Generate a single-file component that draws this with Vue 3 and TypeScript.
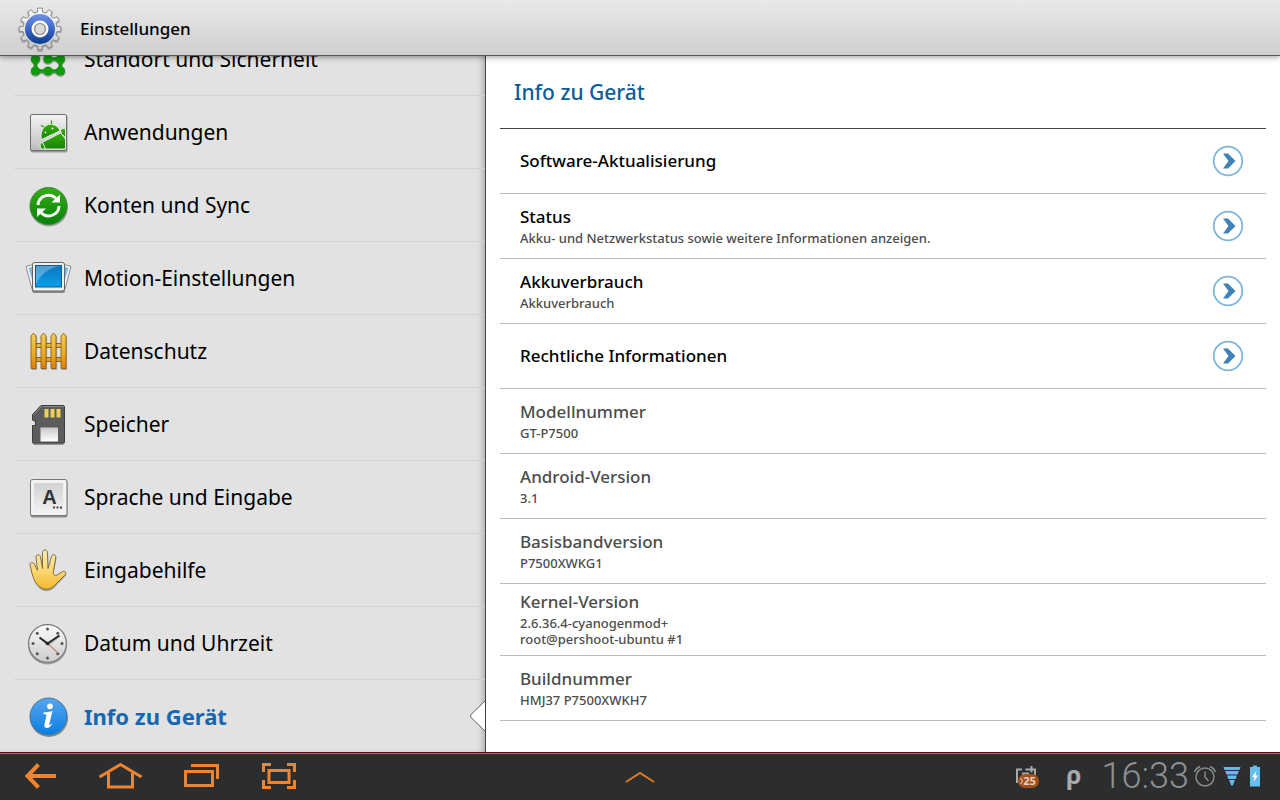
<script setup lang="ts">
interface MenuItem {
  id: string
  label: string
}

interface InfoRow {
  title: string
  lines: string[]
  link: boolean
}

const menu: MenuItem[] = [
  { id: 'lock', label: 'Standort und Sicherheit' },
  { id: 'apps', label: 'Anwendungen' },
  { id: 'sync', label: 'Konten und Sync' },
  { id: 'motion', label: 'Motion-Einstellungen' },
  { id: 'fence', label: 'Datenschutz' },
  { id: 'card', label: 'Speicher' },
  { id: 'key', label: 'Sprache und Eingabe' },
  { id: 'hand', label: 'Eingabehilfe' },
  { id: 'clock', label: 'Datum und Uhrzeit' },
  { id: 'info', label: 'Info zu Gerät' },
]

const selected = 'info'

const rows: InfoRow[] = [
  { title: 'Software-Aktualisierung', lines: [], link: true },
  { title: 'Status', lines: ['Akku- und Netzwerkstatus sowie weitere Informationen anzeigen.'], link: true },
  { title: 'Akkuverbrauch', lines: ['Akkuverbrauch'], link: true },
  { title: 'Rechtliche Informationen', lines: [], link: true },
  { title: 'Modellnummer', lines: ['GT-P7500'], link: false },
  { title: 'Android-Version', lines: ['3.1'], link: false },
  { title: 'Basisbandversion', lines: ['P7500XWKG1'], link: false },
  { title: 'Kernel-Version', lines: ['2.6.36.4-cyanogenmod+', 'root@pershoot-ubuntu #1'], link: false },
  { title: 'Buildnummer', lines: ['HMJ37 P7500XWKH7'], link: false },
]

function gearPath(cx: number, cy: number, outer: number, inner: number, teeth: number): string {
  const step = (Math.PI * 2) / teeth
  const points: string[] = []
  for (let i = 0; i < teeth; i++) {
    const mid = i * step - Math.PI / 2
    const corners: [number, number][] = [
      [inner, mid - step * 0.3],
      [outer, mid - step * 0.19],
      [outer, mid + step * 0.19],
      [inner, mid + step * 0.3],
    ]
    for (const [r, a] of corners) {
      points.push(`${(cx + r * Math.cos(a)).toFixed(2)} ${(cy + r * Math.sin(a)).toFixed(2)}`)
    }
  }
  return `M${points.join('L')}Z`
}

const gear = gearPath(24, 24, 21, 17, 12)
const clockDots = Array.from({ length: 8 }, (_, i) => ({
  x: 23.5 + 14.5 * Math.cos((i * Math.PI) / 4),
  y: 24.5 + 14.5 * Math.sin((i * Math.PI) / 4),
}))
const pickets = [7, 17, 27, 37]
</script>

<template>
  <div class="tablet">
    <header class="header">
      <svg class="gear" viewBox="0 0 48 48" aria-hidden="true">
        <defs>
          <linearGradient id="gearMetal" x1="0" y1="0" x2="0" y2="1">
            <stop offset="0" stop-color="#ffffff" />
            <stop offset="1" stop-color="#c4c4c4" />
          </linearGradient>
          <linearGradient id="gearBlue" x1="0" y1="0" x2="0" y2="1">
            <stop offset="0" stop-color="#6f93e6" />
            <stop offset="0.5" stop-color="#3a66c4" />
            <stop offset="1" stop-color="#0b3c8a" />
          </linearGradient>
        </defs>
        <path :d="gear" transform="translate(0 1)" fill="#777" stroke="#888" stroke-width="1.5" stroke-linejoin="round" opacity="0.6" />
        <path :d="gear" fill="url(#gearMetal)" stroke="#8c8c8c" stroke-linejoin="round" />
        <circle cx="24" cy="24" r="15" fill="url(#gearBlue)" />
        <circle cx="24" cy="24" r="8.5" fill="#fafafa" />
        <circle cx="24" cy="24" r="5.5" fill="#dadada" stroke="#858585" stroke-width="1.2" />
      </svg>
      <h1 class="app-title">Einstellungen</h1>
    </header>

    <main class="panes">
      <nav class="sidebar" aria-label="Einstellungen">
        <button
          v-for="item in menu"
          :key="item.id"
          type="button"
          class="entry"
          :class="{ active: item.id === selected }"
        >
          <svg class="entry-icon" viewBox="0 0 48 48" aria-hidden="true">
            <g v-if="item.id === 'lock'">
              <path d="M36.500 12.500H11.500V37H36.500V25H24" fill="none" stroke="#777" stroke-width="4.500" opacity="0.6" />
              <g fill="#777" opacity="0.6">
                <circle v-for="n in 9" :key="n" :cx="11.500 + ((n - 1) % 3) * 12.500" :cy="12.900 + Math.floor((n - 1) / 3) * 12" r="5" />
              </g>
              <path d="M36.500 12H11.500V36H36.500V24H24" fill="none" stroke="#109a0c" stroke-width="3.500" />
              <g fill="#109a0c">
                <circle v-for="n in 9" :key="n" :cx="11.500 + ((n - 1) % 3) * 12.500" :cy="12 + Math.floor((n - 1) / 3) * 12" r="4.600" />
              </g>
            </g>
            <g v-else-if="item.id === 'apps'">
              <defs>
                <linearGradient id="tile" x1="0" y1="0" x2="0" y2="1">
                  <stop offset="0" stop-color="#f4f4f4" />
                  <stop offset="1" stop-color="#bdbdbd" />
                </linearGradient>
                <linearGradient id="robot" x1="0" y1="0" x2="0" y2="1">
                  <stop offset="0" stop-color="#35ad0c" />
                  <stop offset="1" stop-color="#168404" />
                </linearGradient>
              </defs>
              <rect x="6.500" y="7.500" width="37" height="37" rx="2" fill="#666" opacity="0.6" />
              <rect x="6.500" y="6.500" width="36" height="36" rx="1.500" fill="url(#tile)" stroke="#6e6e6e" />
              <g fill="url(#robot)" stroke="#edf3ea" stroke-width="0.900">
                <path d="M18 34.500L36.800 24.800L41.500 31V39.500Q41.500 41 40 41H21Z" />
                <path d="M17.500 31.500C16 26 18 20 22.500 17.300C27.500 14.600 34 17.500 36 22.800Z" />
                <path d="M37.500 25.500L36.500 22.500Q38.500 19 41.500 21V30Z" />
                <path d="M16 36Q17 33.500 19 35L21.500 41H17.500Q16 39 16 36Z" />
              </g>
              <path d="M27.500 16V12.500M20 19L17 17.500" stroke="#2b9b0b" stroke-width="1.200" />
              <circle cx="21.500" cy="24.500" r="0.900" fill="#fff" />
              <circle cx="28.500" cy="20.500" r="0.900" fill="#fff" />
            </g>
            <g v-else-if="item.id === 'sync'">
              <defs>
                <linearGradient id="syncFill" x1="0" y1="0" x2="0" y2="1">
                  <stop offset="0" stop-color="#35ad16" />
                  <stop offset="1" stop-color="#068106" />
                </linearGradient>
              </defs>
              <circle cx="25" cy="26.500" r="19" fill="#555" opacity="0.5" />
              <circle cx="24.500" cy="25" r="18.500" fill="url(#syncFill)" stroke="#3d8438" />
              <path d="M13.900 24A10.600 10.600 0 0 1 32 17.500" fill="none" stroke="#fff" stroke-width="2.900" />
              <path d="M35.100 25A10.600 10.600 0 0 1 17 31.800" fill="none" stroke="#fff" stroke-width="2.900" />
              <path d="M36 13.500V21.500H27.500Z" fill="#fff" />
              <path d="M13 36V27.500H22Z" fill="#fff" />
            </g>
            <g v-else-if="item.id === 'motion'">
              <defs>
                <linearGradient id="screen" x1="0" y1="0" x2="0" y2="1">
                  <stop offset="0" stop-color="#0a74bd" />
                  <stop offset="1" stop-color="#0aa0ea" />
                </linearGradient>
              </defs>
              <path d="M2 12.500L12 9.500V38L8 35Z" fill="#f6f6f6" stroke="#8b8b8b" stroke-linejoin="round" />
              <path d="M4.500 14L10 12V32Z" fill="#79bcd8" />
              <path d="M47 12.500L37 9.500V38L41 35Z" fill="#f6f6f6" stroke="#8b8b8b" stroke-linejoin="round" />
              <path d="M44.500 14L39 12V32Z" fill="#79bcd8" />
              <rect x="8" y="10" width="33" height="29" rx="2" fill="#555" opacity="0.6" />
              <rect x="8.500" y="8.500" width="32" height="28.500" rx="2" fill="#efefef" stroke="#666" />
              <rect x="11.500" y="11.500" width="26" height="21.500" fill="url(#screen)" stroke="#17597f" />
              <path d="M12 12H36Q19 15 12 30Z" fill="#fff" opacity="0.300" />
            </g>
            <g v-else-if="item.id === 'fence'">
              <defs>
                <linearGradient id="wood" x1="0" y1="0" x2="0" y2="1">
                  <stop offset="0" stop-color="#f3cc5b" />
                  <stop offset="0.600" stop-color="#e9ac1e" />
                  <stop offset="1" stop-color="#dd7c09" />
                </linearGradient>
              </defs>
              <rect x="10" y="16.500" width="30" height="4" fill="#e8bd3c" stroke="#7c6539" />
              <rect x="10" y="30.500" width="30" height="4" fill="#e8a51f" stroke="#7c6539" />
              <path v-for="x in pickets" :key="x" :d="`M${x} 42V9L${x + 2} 6.500H${x + 3.500}L${x + 5.500} 9V42Z`" fill="#666" opacity="0.450" transform="translate(0.600 1)" />
              <path v-for="x in pickets" :key="x" :d="`M${x} 41.500V9L${x + 2} 6.500H${x + 3}L${x + 5} 9V41.500Z`" fill="url(#wood)" stroke="#946118" stroke-width="0.900" stroke-linejoin="round" />
            </g>
            <g v-else-if="item.id === 'card'">
              <defs>
                <linearGradient id="paper" x1="0" y1="0" x2="0" y2="1">
                  <stop offset="0" stop-color="#c9c9c9" />
                  <stop offset="1" stop-color="#ffffff" />
                </linearGradient>
              </defs>
              <path d="M17 6H39L41 8V43L39 45H10L8 43V26L11 25V22L8 20V15Z" fill="#333" opacity="0.450" />
              <path d="M17 5.500H39Q40.500 5.500 40.500 7V41.500Q40.500 43 39 43H10Q8.500 43 8.500 41.500V25.500H11.500V21.500L8.500 20V14.500Z" fill="#5c5c5c" stroke="#3c3c3c" />
              <path d="M17.500 6.500H39.500M9.500 15L17.500 6.500" stroke="#8b8b8b" fill="none" />
              <path d="M20.500 9H24.500V17.500H20.500ZM26.500 9H30.500V17.500H26.500ZM32.500 9H36.500V17.500H32.500Z" fill="#ecd05d" />
              <rect x="16.500" y="27.500" width="17.500" height="14" fill="url(#paper)" />
            </g>
            <g v-else-if="item.id === 'key'">
              <defs>
                <linearGradient id="keycap" x1="0" y1="0" x2="0" y2="1">
                  <stop offset="0" stop-color="#d2d2d2" />
                  <stop offset="1" stop-color="#efefef" />
                </linearGradient>
              </defs>
              <rect x="6.500" y="8" width="37" height="36.500" rx="2" fill="#555" opacity="0.600" />
              <rect x="6.500" y="6.500" width="36.500" height="36" rx="2" fill="#f2f2f2" stroke="#777" />
              <rect x="10" y="10" width="29" height="28" fill="url(#keycap)" />
              <text x="25.500" y="31" class="key-letter" text-anchor="middle">A</text>
              <path d="M29 34.500H31M32.500 34.500H34.500M36 34.500H38" stroke="#444" stroke-width="2" />
            </g>
            <g v-else-if="item.id === 'hand'">
              <defs>
                <linearGradient id="skin" x1="0" y1="0" x2="0" y2="1">
                  <stop offset="0" stop-color="#fbe9b5" />
                  <stop offset="0.500" stop-color="#fbd878" />
                  <stop offset="1" stop-color="#f3b929" />
                </linearGradient>
              </defs>
              <path d="M15 41C9 35 8 27 6 19C5.500 16 9.500 15.500 10.500 18.500L13.500 24.500L12 11C12 8 16 8 16.500 11L18.500 22.500L18.500 6.500C18.500 3.500 23 3.500 23.500 6.500L24 22.500L27.500 10.500C28.500 8 32.500 9 31.800 12L29.500 24.500C29 28 30 30.500 33 29L38.500 25.500C41.500 24.500 43 27 40.500 29.500L32.500 37.500C28 44.500 20 46 15 41Z" fill="#555" opacity="0.450" transform="translate(0.500 1.200)" />
              <path d="M15 40.500C9 35 8 27 6 19C5.500 16 9.500 15.500 10.500 18.500L13.500 24.500L12 11C12 8 16 8 16.500 11L18.500 22.500L18.500 6.500C18.500 3 23 3 23.500 6.500L24 22.500L27.500 10.500C28.500 7.500 32.500 8.500 31.800 12L29.500 24.500C29 28 30 30.500 33 29L38.500 25.500C41.500 24.500 43 27 40.500 29.500L32.500 37.500C28 44 20 45 15 40.500Z" fill="url(#skin)" stroke="#776336" stroke-width="0.900" stroke-linejoin="round" />
            </g>
            <g v-else-if="item.id === 'clock'">
              <defs>
                <linearGradient id="dial" x1="0" y1="0" x2="0" y2="1">
                  <stop offset="0" stop-color="#fbfbfb" />
                  <stop offset="1" stop-color="#cbcbcb" />
                </linearGradient>
              </defs>
              <circle cx="23.500" cy="26" r="19.500" fill="#555" opacity="0.500" />
              <circle cx="23.500" cy="24.500" r="18.900" fill="url(#dial)" stroke="#777" stroke-width="1.200" />
              <circle v-for="(d, i) in clockDots" :key="i" :cx="d.x" :cy="d.y" r="1.500" fill="#555" />
              <path d="M22.500 23.500L34 34" stroke="#c98282" stroke-width="1.200" />
              <path d="M24 27L35 18" stroke="#999" stroke-width="1.500" opacity="0.500" />
              <path d="M15.500 18.500L23.500 24.500L35.500 16.500" fill="none" stroke="#222" stroke-width="2" />
              <circle cx="23.500" cy="24.500" r="1.800" fill="#222" />
            </g>
            <g v-else>
              <defs>
                <linearGradient id="infoFill" x1="0" y1="0" x2="0" y2="1">
                  <stop offset="0" stop-color="#55a7ee" />
                  <stop offset="1" stop-color="#0a7de2" />
                </linearGradient>
              </defs>
              <circle cx="25" cy="26" r="19" fill="#444" opacity="0.550" />
              <circle cx="24.500" cy="24.500" r="18.500" fill="url(#infoFill)" stroke="#4b779c" />
              <circle cx="26" cy="14.300" r="2.900" fill="#fff" />
              <path d="M19.500 20.500Q24 20 28.500 19L25.200 32.500Q25 34 28.500 31Q26.500 36 22.500 36Q19.500 35.500 20.500 32L22.500 23.500Q22.500 22 19.500 22Z" fill="#fff" />
            </g>
          </svg>
          <span class="entry-label">{{ item.label }}</span>
          <svg v-if="item.id === selected" class="notch" viewBox="0 0 17 34" aria-hidden="true">
            <path d="M17 0V1L1.500 17L17 33V34Z" fill="#fff" />
            <path d="M16.500 1.500L2 15.500Q1 17 2 18.500L16.500 32.500" fill="none" stroke="#666" />
          </svg>
        </button>
      </nav>

      <section class="details">
        <h2 class="details-title">Info zu Gerät</h2>
        <ul class="rows">
          <li v-for="row in rows" :key="row.title">
            <component
              :is="row.link ? 'button' : 'div'"
              :type="row.link ? 'button' : undefined"
              class="row"
              :class="{ link: row.link, single: row.lines.length === 0 }"
            >
              <span class="row-text">
                <span class="row-title">{{ row.title }}</span>
                <span v-for="line in row.lines" :key="line" class="row-sub">{{ line }}</span>
              </span>
              <svg v-if="row.link" class="go" viewBox="0 0 32 32" aria-hidden="true">
                <circle cx="16" cy="16" r="14.300" fill="#fff" stroke="#7fb6dc" stroke-width="1.800" />
                <path d="M11 8.500H16L23.500 16L16 23.500H11L16.500 16Z" fill="#3f82b8" />
              </svg>
            </component>
          </li>
        </ul>
      </section>
    </main>

    <footer class="system-bar">
      <div class="nav-keys">
        <button type="button" class="nav-key" aria-label="Zurück">
          <svg viewBox="0 0 48 32" aria-hidden="true">
            <path d="M22.500 4.500L11.500 16L22.500 27.500M11.500 16H40" class="glyph heavy" />
          </svg>
        </button>
        <button type="button" class="nav-key" aria-label="Startseite">
          <svg viewBox="0 0 48 32" aria-hidden="true">
            <path d="M3.500 17L24.500 4.500L45.500 17M12.500 13V27H36.500V13" class="glyph" />
          </svg>
        </button>
        <button type="button" class="nav-key" aria-label="Letzte Anwendungen">
          <svg viewBox="0 0 48 32" aria-hidden="true">
            <path d="M9.500 11.500H36.500V25.500H9.500ZM15 5.500H41.500V19" class="glyph" />
          </svg>
        </button>
        <button type="button" class="nav-key" aria-label="Screenshot">
          <svg viewBox="0 0 48 32" aria-hidden="true">
            <path d="M13 10.500H33V22.500H13ZM7.500 12V4.500H15M31 4.500H38.500V12M7.500 20V27.500H15M31 27.500H38.500V20" class="glyph" />
          </svg>
        </button>
      </div>

      <button type="button" class="nav-key" aria-label="Mini-Apps">
        <svg viewBox="0 0 48 32" aria-hidden="true">
          <path d="M10 22L24 13L38 22" class="glyph thin" />
        </svg>
      </button>

      <div class="status">
        <svg class="notify" viewBox="0 0 26 26" aria-hidden="true">
          <path d="M8 6.500H3V20M11.500 6.500H21V12M17.500 3V9.500M9 14V10.500H15" fill="none" stroke="#a9a9a9" stroke-width="2" />
          <rect x="4" y="11" width="21" height="14" rx="7" fill="#a4501e" />
          <path d="M6.500 15L8.500 18L6.500 21" fill="none" stroke="#dcb9a4" stroke-width="1.200" />
          <text x="15.500" y="22" class="badge-text" text-anchor="middle">25</text>
        </svg>
        <span class="rho">ρ</span>
        <time class="time">16:33</time>
        <svg class="alarm" viewBox="0 0 24 24" aria-hidden="true">
          <circle cx="12" cy="13" r="9" fill="none" stroke="#898b8b" stroke-width="1.500" />
          <path d="M12 7.500V13L15.500 17M1.500 8Q3 4 7 2.500M22.500 8Q21 4 17 2.500" fill="none" stroke="#898b8b" stroke-width="1.500" />
        </svg>
        <svg class="wifi" viewBox="0 0 18 20" aria-hidden="true">
          <path d="M0.500 1H17.500L16.500 4H1.500ZM2.300 5H15.700L14.700 8.500H3.300ZM4.200 9.500H13.800L12.800 13H5.200ZM6 14H12L9.800 19.500H8.200Z" fill="#5fbdec" />
        </svg>
        <svg class="battery" viewBox="0 0 12 22" aria-hidden="true">
          <path d="M4 0.500H8V2H11V21.500H1V2H4Z" fill="#62bff0" />
          <path d="M7.500 6L3 12H5.500L4.500 17L9 10.500H6.500Z" fill="#fff" />
        </svg>
      </div>
    </footer>
  </div>
</template>

<style>
html,
body,
#app {
  height: 100%;
}
</style>

<style scoped>
.tablet {
  display: flex;
  flex-direction: column;
  height: 100%;
  overflow: hidden;
  color: #000;
  background: #fff;
  font-family: 'Noto Sans', 'Open Sans', sans-serif;
}

button {
  margin: 0;
  border: 0;
  background: none;
  color: inherit;
  font: inherit;
  text-align: left;
}

.header {
  z-index: 1;
  display: flex;
  flex: none;
  align-items: center;
  gap: 16px;
  box-sizing: border-box;
  height: 56px;
  padding: 2px 16px 0;
  border-bottom: 1px solid #555;
  background: linear-gradient(#e9e9e9, #cfcfcf);
  box-shadow: 0 1px 6px rgba(0, 0, 0, 0.4);
}

.gear {
  width: 48px;
  height: 48px;
}

.app-title {
  margin: 0;
  font-size: 17px;
  font-weight: 500;
  line-height: 24px;
}

.panes {
  display: flex;
  flex: 1;
  min-height: 0;
}

.sidebar {
  display: flex;
  flex: 0 1 486px;
  flex-direction: column;
  justify-content: flex-end;
  box-sizing: border-box;
  overflow: hidden;
  padding-left: 14px;
  border-right: 1px solid #444;
  background: #e2e2e2;
  box-shadow: inset -5px 0 6px -3px rgba(0, 0, 0, 0.25);
}

.entry {
  position: relative;
  display: flex;
  flex: none;
  align-items: center;
  gap: 12px;
  height: 73px;
  padding: 0 10px;
  border-bottom: 1px solid #d3d3d3;
}

.entry:last-child {
  height: 72px;
  border-bottom: 0;
}

.entry-icon {
  flex: none;
  width: 48px;
  height: 48px;
}

.entry-label {
  font-size: 21px;
  line-height: 30px;
}

.active .entry-label {
  color: #1468b3;
  font-size: 22px;
  font-weight: 700;
}

.notch {
  position: absolute;
  top: 19px;
  right: -1px;
  width: 17px;
  height: 34px;
}

.key-letter {
  fill: #333;
  font-family: 'Liberation Sans', sans-serif;
  font-size: 20px;
  font-weight: 700;
}

.details {
  flex: 1;
  min-width: 0;
  padding: 0 14px;
}

.details-title {
  margin: 0;
  padding: 0 14px;
  border-bottom: 1px solid #444;
  color: #0c5d9a;
  font-size: 21px;
  font-weight: 500;
  line-height: 72px;
}

.rows {
  margin: 0;
  padding: 0;
  list-style: none;
}

.row {
  display: flex;
  align-items: center;
  justify-content: space-between;
  box-sizing: border-box;
  width: 100%;
  min-height: 65px;
  padding: 0 22px 0 20px;
  border-bottom: 1px solid #bdbdbd;
  color: #4c4c4c;
}

.row.link {
  color: #000;
}

.row-text {
  display: flex;
  flex-direction: column;
  padding: 5px 0 8px;
}

.single .row-text {
  padding: 0;
}

.row-title {
  font-size: 17px;
  font-weight: 500;
  line-height: 26px;
}

.row-sub {
  color: #4c4c4c;
  font-size: 13px;
  font-weight: 500;
  line-height: 16px;
}

.go {
  flex: none;
  width: 32px;
  height: 32px;
}

.system-bar {
  display: grid;
  flex: none;
  grid-template-columns: 1fr auto 1fr;
  align-items: start;
  box-sizing: border-box;
  height: 48px;
  border-top: 1px solid #4a0d08;
  background: #2b2d2e;
  box-shadow: inset 0 1px #b87434;
}

.nav-keys {
  display: flex;
}

.nav-key {
  display: flex;
  align-items: center;
  justify-content: center;
  width: 80px;
  height: 46px;
  padding: 0;
}

.nav-key svg {
  width: 48px;
  height: 32px;
}

.glyph {
  fill: none;
  stroke: #ee842f;
  stroke-width: 3;
}

.thin {
  stroke: #dd7a24;
  stroke-width: 2;
}

.heavy {
  stroke-width: 4;
}

.status {
  display: flex;
  align-items: center;
  justify-content: flex-end;
  height: 46px;
  padding-right: 19px;
}

.notify {
  width: 26px;
  height: 26px;
  margin-right: 26px;
}

.badge-text {
  fill: #e5d0c4;
  font-size: 11px;
  font-weight: 700;
}

.rho {
  margin-right: 20px;
  padding-bottom: 4px;
  color: #a9a9a9;
  font-size: 25px;
  font-weight: 700;
  line-height: 34px;
}

.time {
  margin-right: 4px;
  color: #8f9191;
  font-family: Roboto, 'Liberation Sans', sans-serif;
  font-size: 36px;
  font-weight: 300;
  line-height: 46px;
}

.alarm {
  width: 24px;
  height: 24px;
  margin-right: 6px;
}

.wifi {
  width: 18px;
  height: 20px;
  margin-right: 8px;
}

.battery {
  width: 12px;
  height: 22px;
}
</style>
